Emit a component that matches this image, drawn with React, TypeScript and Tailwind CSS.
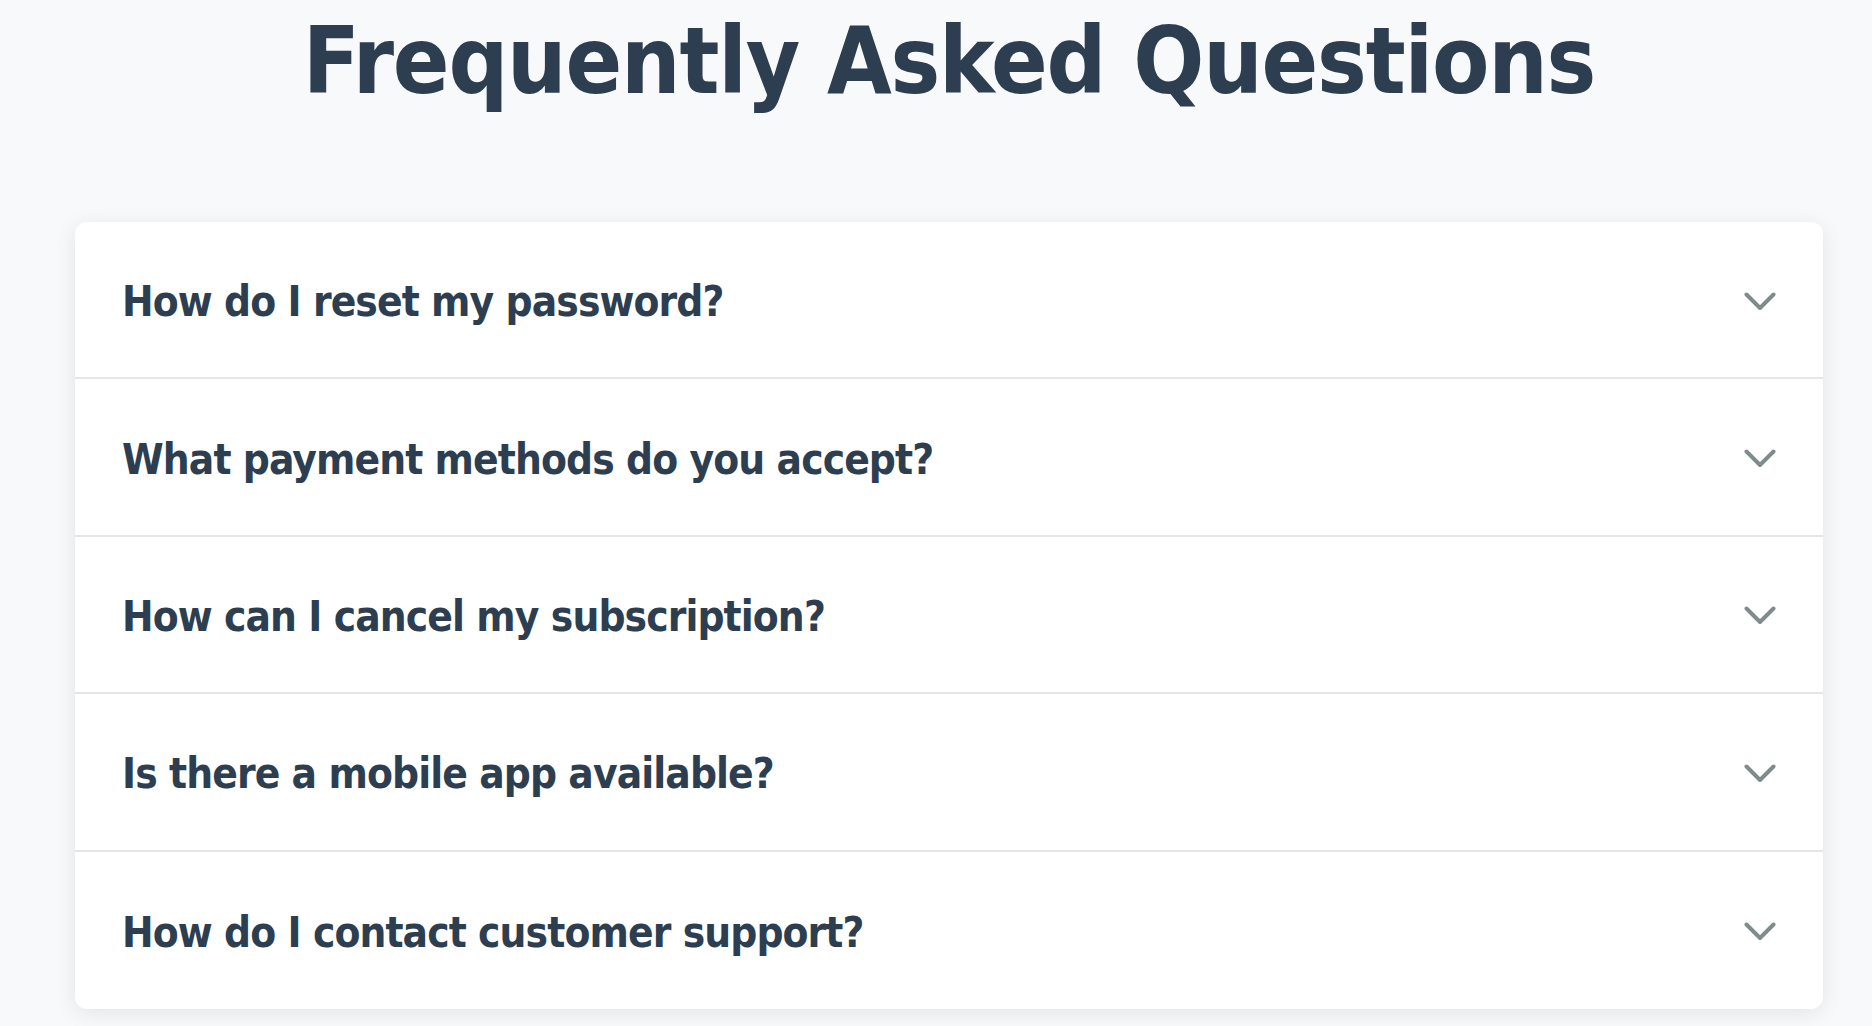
import React from "react";

const questions = [
  "How do I reset my password?",
  "What payment methods do you accept?",
  "How can I cancel my subscription?",
  "Is there a mobile app available?",
  "How do I contact customer support?",
];

function Chevron() {
  return (
    <svg width="32" height="20" viewBox="0 0 32 20" fill="none" className="shrink-0">
      <polyline
        points="2.5,2.5 16,16 29.5,2.5"
        stroke="#7f8c8d"
        strokeWidth="4"
        strokeLinecap="round"
        strokeLinejoin="round"
      />
    </svg>
  );
}

export default function App() {
  return (
    <div
      className="min-h-[1026px] bg-[#f8f9fa] pl-[75px] pr-[49px] pt-[15px]"
      style={{ fontFamily: '"DejaVu Sans Condensed", "DejaVu Sans", sans-serif' }}
    >
      <h1 className="text-center text-[93px] leading-none font-bold tracking-[-1.2px] text-[#2c3e50]">
        Frequently Asked Questions
      </h1>
      <div className="mt-[114px] overflow-hidden rounded-[12px] bg-white shadow-[0_4px_22px_rgba(0,0,0,0.09)]">
        {questions.map((q, i) => (
          <div
            key={q}
            className={`flex h-[157.4px] items-center justify-between pl-[47px] pr-[47px] pt-[4px] ${
              i < questions.length - 1 ? "border-b-2 border-[#e6e6e6]" : ""
            }`}
          >
            <span className="text-[42px] font-bold tracking-[-0.9px] text-[#2c3e50]">{q}</span>
            <Chevron />
          </div>
        ))}
      </div>
    </div>
  );
}
